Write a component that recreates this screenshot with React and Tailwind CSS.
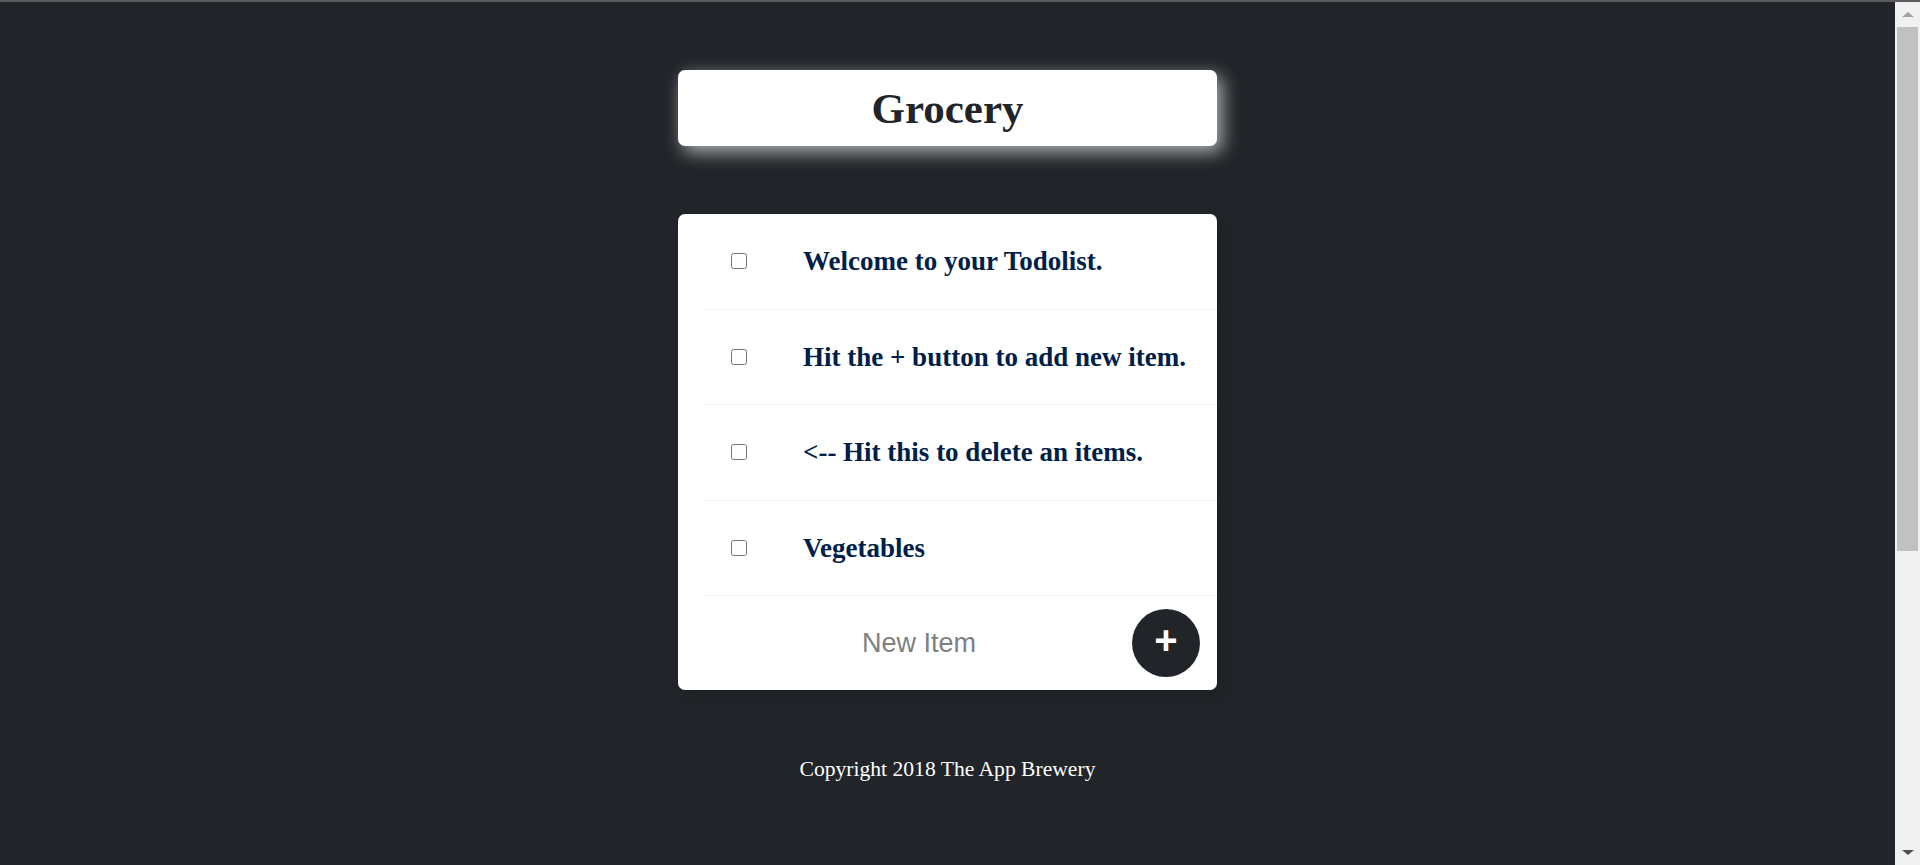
import { useState } from 'react';

const items = [
  'Welcome to your Todolist.',
  'Hit the + button to add new item.',
  '<-- Hit this to delete an items.',
  'Vegetables',
];

const serif = { fontFamily: '"Liberation Serif", "Times New Roman", serif' };
const sans = { fontFamily: '"Liberation Sans", Arial, sans-serif' };

const App = () => {
  const [text, setText] = useState('');

  return (
    <div className="h-[865px] overflow-hidden flex flex-col bg-[#212529]">
      <div className="h-[2px] bg-[#5c5c5c]" />
      <div className="flex-1 flex min-h-0">
        <div className="flex-1 flex flex-col items-center pt-[68px]" style={serif}>
          {/* heading */}
          <div className="w-[539px] h-[76px] bg-white rounded-[7px] flex items-center justify-center shadow-[5px_6px_18px_rgba(255,255,255,0.65)]">
            <h1 className="text-[43px] font-bold text-[#212529] leading-none">Grocery</h1>
          </div>

          {/* list */}
          <div className="w-[539px] mt-[68px] bg-white rounded-[7px] shadow-[5px_5px_15px_-5px_rgba(0,0,0,0.3)]">
            <div className="ml-[26px]">
              {items.map((it, idx) => (
                <div key={idx} className="h-[95.6px] flex items-center border-b border-[#f1f1f1]">
                  <input type="checkbox" className="ml-[27px] w-[16px] h-[16px] shrink-0" />
                  <p className="ml-[56px] text-[27px] font-bold text-[#00204a] whitespace-nowrap">{it}</p>
                </div>
              ))}
              <div className="h-[94px] flex items-center">
                <input
                  type="text"
                  value={text}
                  onChange={(e) => setText(e.target.value)}
                  placeholder="New Item"
                  className="ml-[4px] w-[422px] h-[80px] text-center text-[27px] bg-transparent outline-none placeholder:text-[#808080] text-[#212529]"
                  style={sans}
                />
                <button className="ml-[2px] w-[68px] h-[68px] rounded-full bg-[#212529] text-white text-[40px] font-bold leading-none pb-[6px] flex items-center justify-center" style={sans}>
                  +
                </button>
              </div>
            </div>
          </div>

          <footer className="mt-[63px] text-white text-[21.6px] text-center">
            Copyright 2018 The App Brewery
          </footer>
        </div>

        {/* scrollbar */}
        <div className="w-[25px] bg-[#f1f1f1] flex flex-col items-center">
          <div className="h-[25px] w-full flex items-center justify-center">
            <div className="w-0 h-0 border-l-[6px] border-r-[6px] border-b-[5px] border-l-transparent border-r-transparent border-b-[#a3a3a3]" />
          </div>
          <div className="w-[21px] h-[524px] bg-[#c1c1c1]" />
          <div className="flex-1" />
          <div className="h-[25px] w-full flex items-center justify-center">
            <div className="w-0 h-0 border-l-[6px] border-r-[6px] border-t-[5px] border-l-transparent border-r-transparent border-t-[#505050]" />
          </div>
        </div>
      </div>
    </div>
  );
};

export default App;
